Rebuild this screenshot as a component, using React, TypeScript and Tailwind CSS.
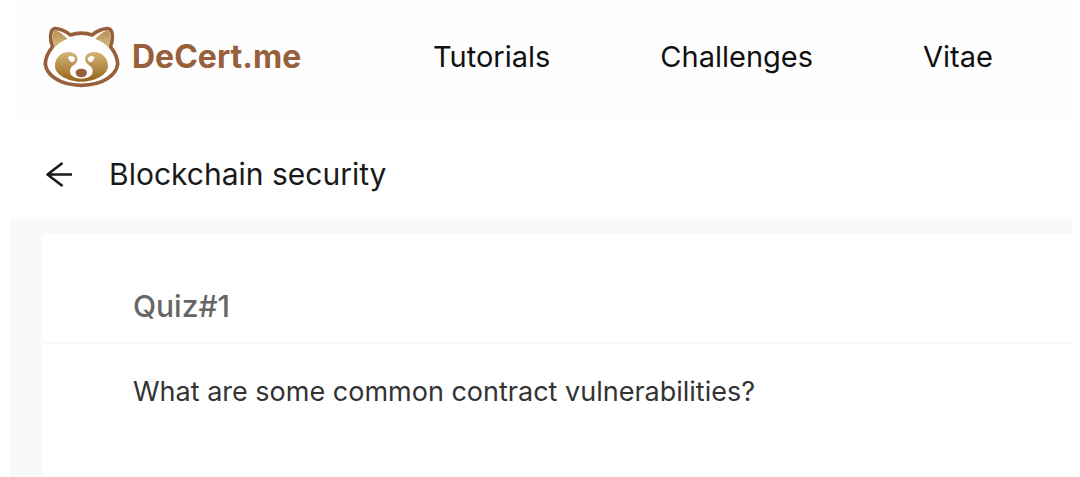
const navItems = ["Tutorials", "Challenges", "Vitae"];

function RaccoonLogo() {
  return (
    <svg viewBox="24 33 231 186" className="h-[62px] w-[77px] shrink-0" fill="none" aria-hidden="true">
      <defs>
        <linearGradient id="fur" x1="0" y1="0" x2="0" y2="1">
          <stop offset="0" stopColor="#d5b679" />
          <stop offset="1" stopColor="#956318" />
        </linearGradient>
        <linearGradient id="ear" x1="0" y1="0" x2="0" y2="1">
          <stop offset="0" stopColor="#b88d50" />
          <stop offset="1" stopColor="#d8bc83" />
        </linearGradient>
      </defs>
      <path
        d="M58 41C70 39 93 48 106 60C127 53 151 53 172 60C185 48 208 39 221 41C235 45 235 76 226 95C240 112 248 130 248 148C244 178 207 211 139 211C71 211 35 178 31 148C31 130 39 112 53 95C44 76 44 45 58 41Z"
        fill="#fff"
        stroke="#97603b"
        strokeWidth="11"
        strokeLinejoin="round"
      />
      <path d="M59 47C70 47 84 57 97 72C79 79 68 87 60 97C51 80 51 53 59 47Z" fill="url(#ear)" />
      <path d="M220 47C208 47 195 57 181 72C199 79 211 87 219 97C228 80 228 53 220 47Z" fill="url(#ear)" />
      <path
        d="M103 111C76 110 59 131 60 155C62 180 101 200 139 200C177 200 217 180 219 155C220 131 202 110 175 111C157 112 148 124 151 137C154 149 171 151 173 166C175 183 158 191 139 191C120 191 103 183 105 166C107 151 124 149 127 137C130 124 121 112 103 111Z"
        fill="url(#fur)"
      />
      <path d="M101 125C106 120 119 124 120 132C120 139 113 143 107 140C103 138 104 134 101 132C98 130 99 127 101 125Z" fill="#fff" />
      <path d="M177 125C172 120 159 124 158 132C158 139 165 143 171 140C175 138 174 134 177 132C180 130 179 127 177 125Z" fill="#fff" />
      <path d="M139 161C149 161 157 166 156 173C155 182 147 187 139 187C131 187 123 182 122 173C121 166 129 161 139 161Z" fill="#97603b" />
    </svg>
  );
}

function BackArrow() {
  return (
    <svg viewBox="0 0 28 28" className="size-7" fill="none" stroke="#1a1a1a" strokeWidth="2.6" strokeLinejoin="round" aria-hidden="true">
      <path d="M27 13.5H2M17.5 2L2.5 13.5L17.5 25" />
    </svg>
  );
}

export default function App() {
  return (
    <div className="flex min-h-screen flex-col bg-white pr-2 pl-[10px] font-[Inter,'Liberation_Sans',sans-serif]">
      <header className="flex h-[126px] items-start bg-[#fefefe] pt-[26px] pl-[33px]">
        <a href="#home" className="flex w-[390px] shrink-0 items-center gap-3">
          <RaccoonLogo />
          <span className="text-[32px] font-bold text-[#97603b]">DeCert.me</span>
        </a>
        <nav className="flex h-[62px] items-center gap-[110px] text-[29px] text-[#111]">
          {navItems.map((item) => (
            <a key={item} href={`#${item.toLowerCase()}`}>
              {item}
            </a>
          ))}
        </nav>
      </header>

      <div className="flex h-[93px] items-center gap-9 pt-1 pl-[35px] text-[#1a1a1a]">
        <button type="button" aria-label="Back">
          <BackArrow />
        </button>
        <h1 className="text-[30px]">Blockchain security</h1>
      </div>

      <main className="flex flex-1 flex-col bg-[#f9f9f9] pt-[15px] pl-[33px]">
        <section className="flex-1 bg-white">
          <h2 className="flex h-[110px] items-end border-b-2 border-[#f8f8f8] pb-[13px] pl-[90px] text-[30px] font-medium text-[#666]">
            Quiz#1
          </h2>
          <p className="pt-7 pl-[90px] text-[27px] text-[#333]">What are some common contract vulnerabilities?</p>
        </section>
      </main>
    </div>
  );
}
